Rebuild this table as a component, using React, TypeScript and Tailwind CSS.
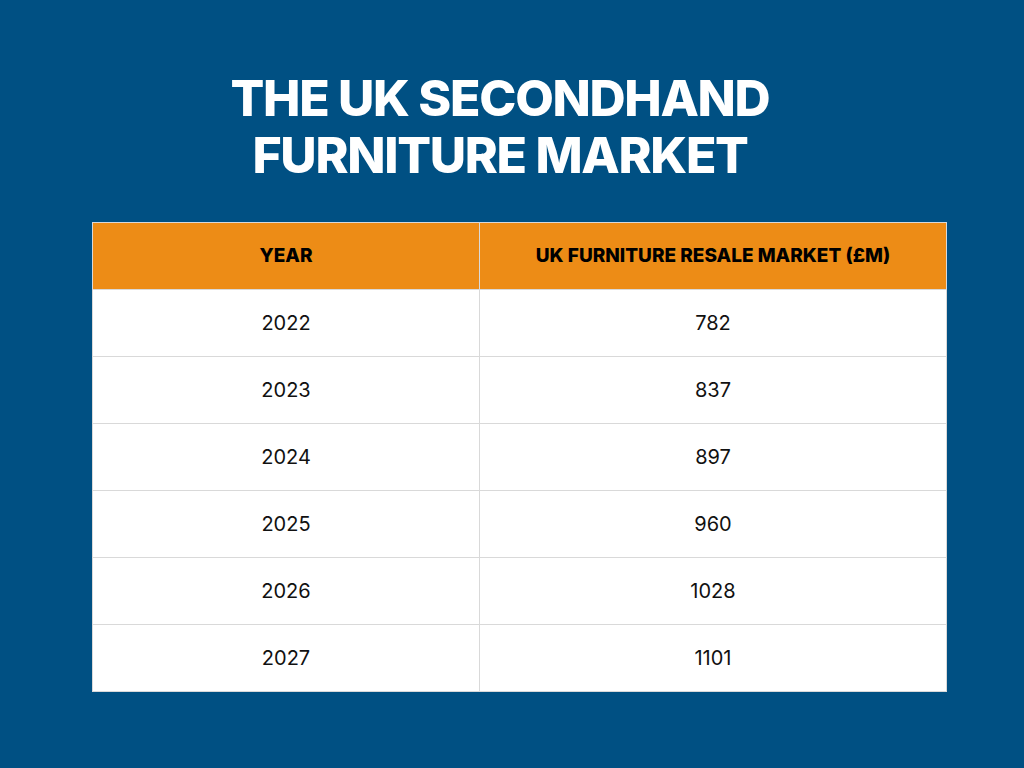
import React from 'react';

const rows = [
  { year: '2022', value: '782' },
  { year: '2023', value: '837' },
  { year: '2024', value: '897' },
  { year: '2025', value: '960' },
  { year: '2026', value: '1028' },
  { year: '2027', value: '1101' },
];

const App = () => {
  return (
    <div
      className="w-[1024px] h-[768px] bg-[#005083] overflow-hidden"
      style={{ fontFamily: 'Inter, "Open Sans", sans-serif' }}
    >
      <div className="w-[1000px] pt-[70px] text-center">
        <h1 className="text-[50px] leading-[57px] font-extrabold text-white tracking-[-1.3px]">
          THE UK SECONDHAND
          <br />
          FURNITURE MARKET
        </h1>
      </div>

      <div className="ml-[92px] mt-[38px] w-[855px]">
        <table className="w-full border-collapse border border-[#d9d9d9]">
          <thead>
            <tr className="bg-[#ed8c16] h-[67px]">
              <th className="w-[387px] border border-[#d9d9d9] text-[19px] font-extrabold text-black">
                YEAR
              </th>
              <th className="border border-[#d9d9d9] text-[19px] font-extrabold text-black">
                UK FURNITURE RESALE MARKET (£M)
              </th>
            </tr>
          </thead>
          <tbody>
            {rows.map((row) => (
              <tr key={row.year} className="bg-white h-[67px]">
                <td className="border border-[#d9d9d9] text-center text-[20px] text-[#111]">
                  {row.year}
                </td>
                <td className="border border-[#d9d9d9] text-center text-[20px] text-[#111]">
                  {row.value}
                </td>
              </tr>
            ))}
          </tbody>
        </table>
      </div>
    </div>
  );
};

export default App;
